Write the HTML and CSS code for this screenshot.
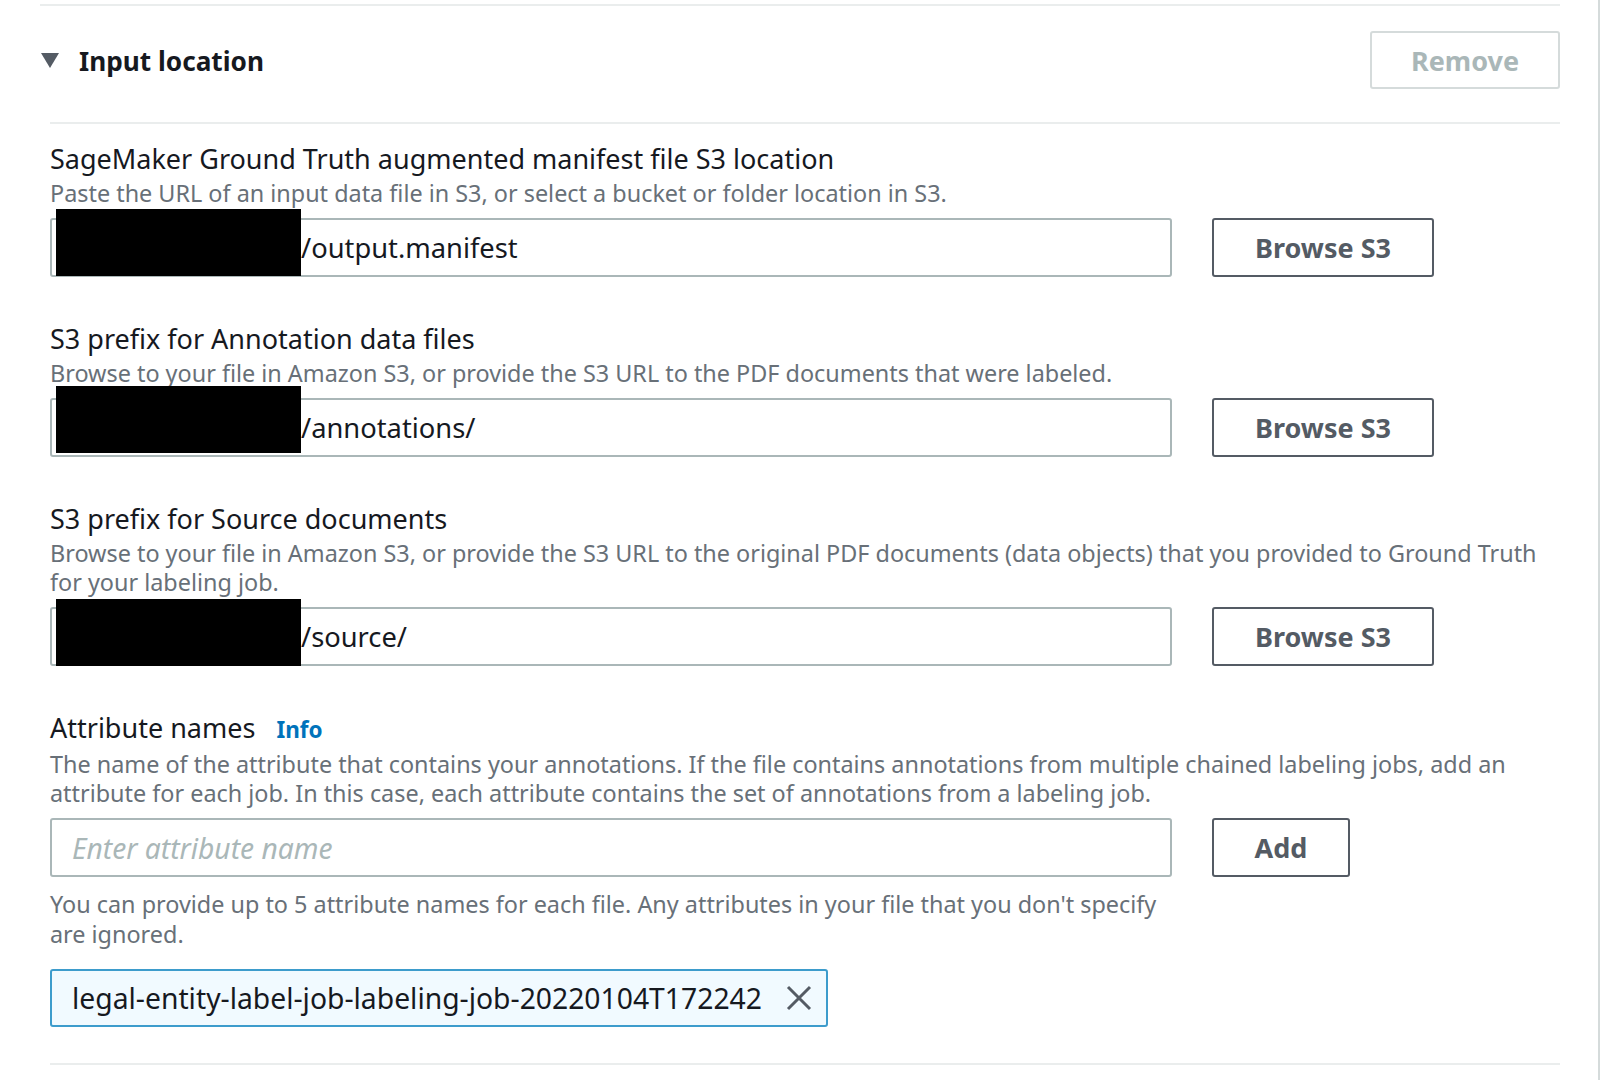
FILE: index.html
```html
<!DOCTYPE html>
<html lang="en">
<head>
  <meta charset="UTF-8">
  <title>Input location</title>
  <link rel="stylesheet" href="styles.css">
</head>
<body>
  <div class="page">
    <section class="panel">
      <div class="panel-head">
        <div class="panel-title">
          <span class="caret"></span>
          <h2>Input location</h2>
        </div>
        <button class="btn btn-disabled" disabled>Remove</button>
      </div>

      <div class="panel-body">
        <div class="field">
          <div class="field-label">SageMaker Ground Truth augmented manifest file S3 location</div>
          <div class="field-desc">Paste the URL of an input data file in S3, or select a bucket or folder location in S3.</div>
          <div class="field-row">
            <div class="input">
              <span class="redact r1"></span>
              <span class="input-value">/output.manifest</span>
            </div>
            <button class="btn btn-browse">Browse S3</button>
          </div>
        </div>

        <div class="field">
          <div class="field-label">S3 prefix for Annotation data files</div>
          <div class="field-desc">Browse to your file in Amazon S3, or provide the S3 URL to the PDF documents that were labeled.</div>
          <div class="field-row">
            <div class="input">
              <span class="redact r2"></span>
              <span class="input-value">/annotations/</span>
            </div>
            <button class="btn btn-browse">Browse S3</button>
          </div>
        </div>

        <div class="field">
          <div class="field-label">S3 prefix for Source documents</div>
          <div class="field-desc">Browse to your file in Amazon S3, or provide the S3 URL to the original PDF documents (data objects) that you provided to Ground Truth for your labeling job.</div>
          <div class="field-row">
            <div class="input">
              <span class="redact r3"></span>
              <span class="input-value">/source/</span>
            </div>
            <button class="btn btn-browse">Browse S3</button>
          </div>
        </div>

        <div class="field field-last">
          <div class="field-label">Attribute names <a class="info-link" href="#">Info</a></div>
          <div class="field-desc">The name of the attribute that contains your annotations. If the file contains annotations from multiple chained labeling jobs, add an attribute for each job. In this case, each attribute contains the set of annotations from a labeling job.</div>
          <div class="field-row">
            <div class="input">
              <span class="placeholder">Enter attribute name</span>
            </div>
            <button class="btn btn-add">Add</button>
          </div>
          <div class="field-hint">You can provide up to 5 attribute names for each file. Any attributes in your file that you don't specify are ignored.</div>
          <div class="token">
            <span class="token-text">legal-entity-label-job-labeling-job-20220104T172242</span>
            <svg class="token-close" width="26" height="26" viewBox="0 0 26 26">
              <path d="M2 2 L24 24 M24 2 L2 24" stroke="#545b64" stroke-width="3" fill="none"/>
            </svg>
          </div>
        </div>
      </div>
    </section>
  </div>
</body>
</html>
```

FILE: styles.css
```css
body {
  margin: 0;
  background: #ffffff;
  font-family: "Noto Sans", "Open Sans", sans-serif;
  color: #16191f;
}
.page {
  width: 1600px;
  height: 1080px;
  box-sizing: border-box;
  border-right: 2px solid #d5dbdb;
  padding-top: 4px;
}
.panel {
  margin-left: 40px;
  width: 1520px;
  border-top: 2px solid #eaeded;
}
.panel-head {
  display: flex;
  justify-content: space-between;
  align-items: center;
  padding: 25px 0 33px 0;
}
.panel-title {
  display: flex;
  align-items: center;
}
.caret {
  width: 0;
  height: 0;
  margin-left: 1px;
  margin-right: 20px;
  border-left: 9px solid transparent;
  border-right: 9px solid transparent;
  border-top: 15px solid #545b64;
}
.panel-title h2 {
  margin: 0;
  font-size: 26.2px;
  font-weight: bold;
  color: #16191f;
  position: relative;
  top: 1px;
}
.panel-body {
  margin-left: 10px;
  border-top: 2px solid #eaeded;
  border-bottom: 2px solid #eaeded;
  padding-top: 15px;
  padding-bottom: 36px;
}
.field {
  margin-bottom: 42px;
}
.field-last {
  margin-bottom: 0;
}
.field-label {
  font-size: 27px;
  line-height: 40px;
  color: #16191f;
}
.info-link {
  margin-left: 14px;
  font-size: 22.5px;
  font-weight: bold;
  color: #0073bb;
  text-decoration: none;
}
.field-desc {
  font-size: 23.4px;
  line-height: 29px;
  color: #687078;
  margin-bottom: 10px;
  padding-right: 20px;
}
.field-row {
  display: flex;
  align-items: center;
  gap: 40px;
}
.input {
  position: relative;
  width: 1122px;
  height: 59px;
  box-sizing: border-box;
  border: 2px solid #aab7b8;
  border-radius: 3px;
  display: flex;
  align-items: center;
  padding-left: 20px;
  font-size: 27.3px;
  color: #16191f;
}
.input-value {
  margin-left: 229px;
}
.placeholder {
  font-size: 28.2px;
  font-style: italic;
  color: #aab7b8;
}
.redact {
  position: absolute;
  left: 4px;
  width: 245px;
  height: 67px;
  background: #000000;
}
.r1 { top: -11px; }
.r2 { top: -14px; }
.r3 { top: -10px; }
.btn {
  height: 59px;
  box-sizing: border-box;
  border: 2px solid #545b64;
  border-radius: 3px;
  background: #ffffff;
  color: #545b64;
  font-family: "Noto Sans", "Open Sans", sans-serif;
  font-size: 27px;
  font-weight: bold;
  padding: 0;
}
.btn-browse {
  width: 222px;
}
.btn-add {
  width: 138px;
}
.btn-disabled {
  width: 190px;
  height: 58px;
  border-color: #d5dbdb;
  color: #aab7b8;
}
.field-hint {
  width: 1110px;
  font-size: 23.4px;
  line-height: 30px;
  color: #687078;
  margin-top: 12px;
}
.token {
  display: inline-flex;
  align-items: center;
  margin-top: 20px;
  height: 58px;
  box-sizing: border-box;
  border: 2px solid #3d9ccc;
  border-radius: 3px;
  background: #f1faff;
  padding: 0 14px 0 20px;
  font-size: 28.3px;
  color: #16191f;
}
.token-close {
  margin-left: 24px;
}
```
